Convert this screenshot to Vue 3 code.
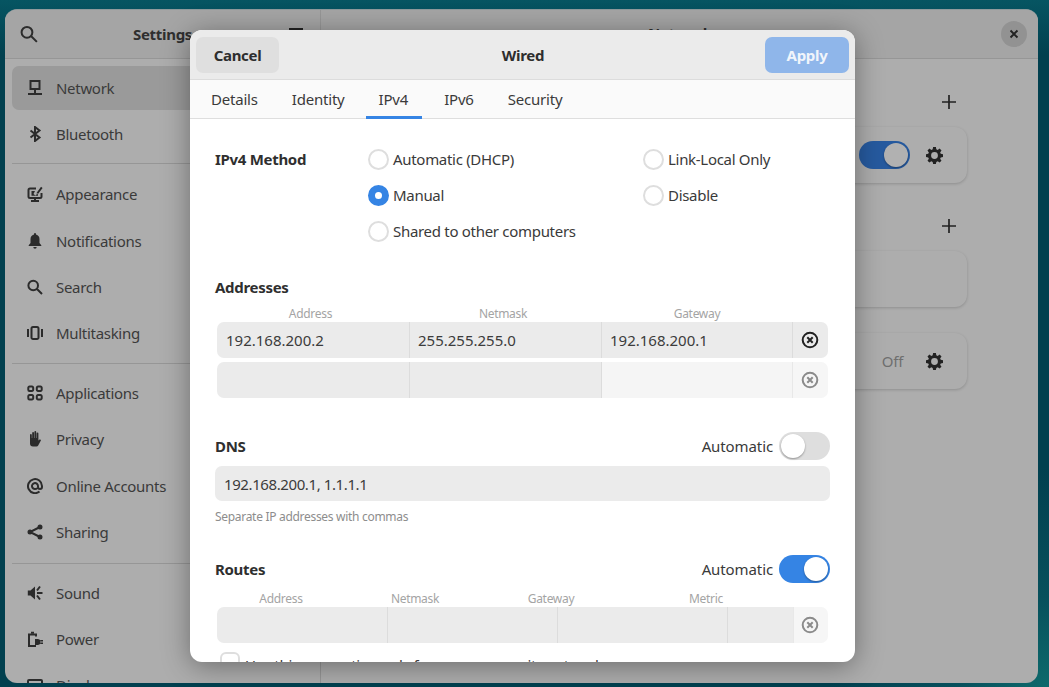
<script setup>
const groups = [
  [
    { name: 'Network', active: true, d: 'M2.500 0h11v10h-11z M4.500 2v6h7V2z M7 10h2v3H7z M1 13h14v2H1z' },
    { name: 'Bluetooth', s: 'M3.500 4.500l9 7L8 15V1l4.500 3.500-9 7' },
  ],
  [
    { name: 'Appearance', s: 'M9 2.500H3A1.500 1.500 0 0 0 1.500 4v6.500A1.500 1.500 0 0 0 3 12h10a1.500 1.500 0 0 0 1.500-1.500V7 M4 15h8', d: 'M4.500 5H8L6.500 8l2 1.500L11 7v2.800H4.500z M9.500 7L14 .8l1.600 1.200-5 6.500z M7 12h2v3H7z' },
    { name: 'Notifications', d: 'M8 0a1 1 0 0 1 1 1v.6A4.800 4.800 0 0 1 12.500 6.300V10l1.800 2.200V13H1.700v-.8L3.500 10V6.300A4.800 4.800 0 0 1 7 1.600V1a1 1 0 0 1 1-1z M6.300 14h3.400a1.700 1.700 0 0 1-3.400 0z' },
    { name: 'Search', s: 'M11 6.500a4.800 4.800 0 1 1-9.600 0 4.800 4.800 0 0 1 9.600 0z M10 10l5 5' },
    { name: 'Multitasking', s: 'M6 2h4a1.500 1.500 0 0 1 1.500 1.500v9A1.500 1.500 0 0 1 10 14H6a1.500 1.500 0 0 1-1.500-1.500v-9A1.500 1.500 0 0 1 6 2z M1 4v8 M15 4v8' },
  ],
  [
    { name: 'Applications', s: 'M2.500 1.500h2.500a1.200 1.200 0 0 1 1.200 1.200v2.100a1.200 1.200 0 0 1-1.200 1.200H2.500a1.200 1.200 0 0 1-1.200-1.200V2.700a1.200 1.200 0 0 1 1.200-1.200z M11 1.500h2.500a1.200 1.200 0 0 1 1.200 1.200v2.100a1.200 1.200 0 0 1-1.200 1.200H11a1.200 1.200 0 0 1-1.200-1.200V2.700A1.200 1.200 0 0 1 11 1.500z M2.500 10h2.500a1.200 1.200 0 0 1 1.200 1.200v2.100a1.200 1.200 0 0 1-1.200 1.200H2.500a1.200 1.200 0 0 1-1.200-1.200v-2.100A1.200 1.200 0 0 1 2.500 10z M11 10h2.500a1.200 1.200 0 0 1 1.200 1.200v2.100a1.200 1.200 0 0 1-1.200 1.200H11a1.200 1.200 0 0 1-1.200-1.200v-2.100A1.200 1.200 0 0 1 11 10z' },
    { name: 'Privacy', d: 'M3 4a.9.9 0 0 1 1.800 0v3h.4V2a.9.9 0 0 1 1.800 0v5h.4V1a.9.9 0 0 1 1.800 0v6h.4V2.500a.9.9 0 0 1 1.800 0V9.500l1.600-1.200 1 .9-2.800 5.300a2 2 0 0 1-1.800 1H6a3 3 0 0 1-3-3z' },
    { name: 'Online Accounts', s: 'M12.500 13.500A7 7 0 1 1 15 8v1a2 2 0 0 1-4 0V8a3 3 0 1 0-.8 2.100' },
    { name: 'Sharing', d: 'M15.500 3a2.500 2.500 0 1 1-5 0 2.500 2.500 0 0 1 5 0z M5.500 8a2.500 2.500 0 1 1-5 0 2.500 2.500 0 0 1 5 0z M15.500 13a2.500 2.500 0 1 1-5 0 2.500 2.500 0 0 1 5 0z', s: 'M13 3L3 8l10 5' },
  ],
  [
    { name: 'Sound', d: 'M8 1.500v13L3.500 10.500H.8v-5h2.700z', s: 'M10 8h5.500 M10 5.500l3-4 M10 10.500l3 4' },
    { name: 'Power', s: 'M9 5.500V3.500H2V15h7', d: 'M4 .8h3v2H4z M8 8h2.500a3 3 0 0 1 3 3 3 3 0 0 1-3 3H8z M13 9h3v1.500h-3z M13 11.500h3V13h-3z' },
    { name: 'Displays', s: 'M2 3h12a1 1 0 0 1 1 1v7a1 1 0 0 1-1 1H2a1 1 0 0 1-1-1V4a1 1 0 0 1 1-1z' },
  ],
]
const tabs = ['Details', 'Identity', 'IPv4', 'IPv6', 'Security']
const radiosA = [
  { label: 'Automatic (DHCP)' },
  { label: 'Manual', on: true },
  { label: 'Shared to other computers' },
]
const radiosB = [{ label: 'Link-Local Only' }, { label: 'Disable' }]
const addressRows = [
  { values: ['192.168.200.2', '255.255.255.0', '192.168.200.1'], on: true },
  { values: ['', '', ''], on: false },
]
const routeHeads = ['Address', 'Netmask', 'Gateway', 'Metric']
</script>

<template>
  <div class="desktop">
    <div class="window">
      <header class="win-head">
        <div class="wh-left">
          <svg class="ic lg" viewBox="0 0 16 16"><path fill="none" stroke="currentColor" stroke-width="1.800" d="M11 6.500a4.800 4.800 0 1 1-9.600 0 4.800 4.800 0 0 1 9.600 0z M10 10l5 5" /></svg>
          <span class="wh-title">Settings</span>
          <svg class="ic hamb" viewBox="0 0 16 16"><path fill="currentColor" d="M1 2h14v2H1z M1 7h14v2H1z M1 12h14v2H1z" /></svg>
        </div>
        <div class="wh-right">
          <span class="wh-net">Network</span>
          <span class="close"><svg viewBox="0 0 16 16"><path fill="none" stroke="currentColor" stroke-width="2.200" d="M4 4l8 8 M12 4l-8 8" /></svg></span>
        </div>
      </header>
      <div class="win-body">
        <nav class="side">
          <div v-for="(g, i) in groups" :key="i" class="group">
            <div v-for="it in g" :key="it.name" class="item" :class="{ active: it.active }">
              <svg class="ic" viewBox="0 0 16 16">
                <path v-if="it.s" :d="it.s" fill="none" stroke="currentColor" stroke-width="2" />
                <path v-if="it.d" :d="it.d" fill="currentColor" fill-rule="evenodd" />
              </svg>
              <span>{{ it.name }}</span>
            </div>
          </div>
        </nav>
        <main class="pane">
          <div class="plus-row"><svg class="ic" viewBox="0 0 16 16"><path stroke="currentColor" stroke-width="1.700" d="M8 1v14 M1 8h14" /></svg></div>
          <div class="card">
            <span class="sw dark"><i></i></span>
            <svg class="ic gear" viewBox="0 0 16 16"><path fill="currentColor" fill-rule="evenodd" d="M6.700 0h2.600l.4 2.200 1.300.6L12.800 1.500l1.800 1.800-1.300 1.800.6 1.300 2.100.4v2.600l-2.100.4-.6 1.300 1.300 1.800-1.800 1.800-1.800-1.300-1.300.6-.4 2h-2.600l-.4-2-1.300-.6-1.800 1.300-1.800-1.800 1.300-1.800-.6-1.300-2.100-.4V6.800l2.100-.4.6-1.300-1.300-1.800 1.800-1.800 1.800 1.300 1.300-.6z M8 4.800a3.200 3.200 0 1 0 0 6.400 3.200 3.200 0 0 0 0-6.400z" /></svg>
          </div>
          <div class="plus-row second"><svg class="ic" viewBox="0 0 16 16"><path stroke="currentColor" stroke-width="1.700" d="M8 1v14 M1 8h14" /></svg></div>
          <div class="card"></div>
          <div class="card third">
            <span class="off">Off</span>
            <svg class="ic gear" viewBox="0 0 16 16"><path fill="currentColor" fill-rule="evenodd" d="M6.700 0h2.600l.4 2.200 1.300.6L12.800 1.500l1.800 1.800-1.300 1.800.6 1.300 2.100.4v2.600l-2.100.4-.6 1.300 1.300 1.800-1.800 1.800-1.800-1.300-1.300.6-.4 2h-2.600l-.4-2-1.300-.6-1.800 1.300-1.800-1.800 1.300-1.800-.6-1.300-2.100-.4V6.800l2.100-.4.6-1.300-1.300-1.800 1.800-1.800 1.800 1.300 1.300-.6z M8 4.800a3.200 3.200 0 1 0 0 6.400 3.200 3.200 0 0 0 0-6.400z" /></svg>
          </div>
        </main>
      </div>
    </div>

    <section class="dialog">
      <div class="d-head">
        <button class="btn cancel">Cancel</button>
        <strong>Wired</strong>
        <button class="btn apply">Apply</button>
      </div>
      <div class="tabs">
        <span v-for="t in tabs" :key="t" class="tab" :class="{ on: t === 'IPv4' }">{{ t }}</span>
      </div>
      <div class="d-body">
        <div class="method">
          <b class="m-label">IPv4 Method</b>
          <div class="m-col a">
            <label v-for="r in radiosA" :key="r.label" class="radio"><i :class="{ on: r.on }"></i>{{ r.label }}</label>
          </div>
          <div class="m-col">
            <label v-for="r in radiosB" :key="r.label" class="radio"><i></i>{{ r.label }}</label>
          </div>
        </div>

        <b class="sec addr-title">Addresses</b>
        <div class="grid-head addr"><span>Address</span><span>Netmask</span><span>Gateway</span><span></span></div>
        <div v-for="(r, i) in addressRows" :key="i" class="grid-row addr">
          <span v-for="(v, j) in r.values" :key="j" class="cell" :class="{ pale: j === 2 && !r.on }">{{ v }}</span>
          <span class="cell del" :class="{ on: r.on }">
            <svg viewBox="0 0 18 18"><circle cx="9" cy="9" r="7.300" fill="none" stroke="currentColor" stroke-width="2" /><path d="M6.300 6.300l5.400 5.400 M11.700 6.300l-5.400 5.400" stroke="currentColor" stroke-width="2" /></svg>
          </span>
        </div>

        <div class="sec-row dns-row">
          <b class="sec">DNS</b>
          <span class="auto">Automatic <span class="sw"><i></i></span></span>
        </div>
        <div class="input">192.168.200.1, 1.1.1.1</div>
        <div class="hint">Separate IP addresses with commas</div>

        <div class="sec-row routes-row">
          <b class="sec">Routes</b>
          <span class="auto">Automatic <span class="sw blue"><i></i></span></span>
        </div>
        <div class="grid-head route"><span v-for="h in routeHeads" :key="h">{{ h }}</span></div>
        <div class="grid-row route">
          <span class="cell"></span><span class="cell"></span><span class="cell"></span><span class="cell"></span>
          <span class="cell del">
            <svg viewBox="0 0 18 18"><circle cx="9" cy="9" r="7.300" fill="none" stroke="currentColor" stroke-width="2" /><path d="M6.300 6.300l5.400 5.400 M11.700 6.300l-5.400 5.400" stroke="currentColor" stroke-width="2" /></svg>
          </span>
        </div>
        <label class="check"><i></i><span>Use this connection only for resources on its network</span></label>
      </div>
    </section>
  </div>
</template>

<style>
html, body { margin: 0; height: 100%; overflow: hidden; }
</style>

<style scoped>
.desktop {
  position: relative;
  width: 1049px;
  height: 687px;
  box-sizing: border-box;
  padding: 9px 11px 4px 5px;
  overflow: hidden;
  display: flex;
  font-family: "Noto Sans", "Open Sans", sans-serif;
  font-size: 15px;
  letter-spacing: -0.3px;
  color: #333;
  background:
    radial-gradient(circle at 1049px 687px, #0d6a6c 0, #07505c 90px, transparent 220px),
    linear-gradient(180deg, #065562 0, #01404f 8%, #01404f 100%);
}
.window {
  flex: 1;
  display: flex;
  flex-direction: column;
  border-radius: 12px;
  overflow: hidden;
  background: #adadad;
  border-top: 1px solid #8f9a9c;
}
.win-head {
  height: 48px;
  flex: none;
  display: flex;
  background: #a5a5a5;
  border-bottom: 1px solid #969696;
}
.wh-left {
  width: 316px;
  flex: none;
  box-sizing: border-box;
  display: flex;
  align-items: center;
  padding: 0 16px 0 15px;
  border-right: 1px solid #969696;
}
.wh-title { flex: 1; text-align: center; font-weight: 700; font-size: 15px; color: #2f2f2f; padding-right: 1px; }
.wh-right { flex: 1; position: relative; display: flex; align-items: center; justify-content: flex-end; padding-right: 11px; }
.wh-net { position: absolute; left: 327px; top: 11px; line-height: 24px; font-weight: 700; color: #2f2f2f; }
.close {
  width: 26px; height: 26px; border-radius: 50%; background: #929292;
  display: flex; align-items: center; justify-content: center; color: #222;
}
.close svg { width: 14px; height: 14px; }
.ic { width: 16px; height: 16px; flex: none; display: block; }
.ic.lg { width: 18px; height: 18px; color: #2d2d2d; }
.hamb { color: #222; }
.win-body { flex: 1; min-height: 0; display: flex; }
.side {
  width: 316px;
  flex: none;
  box-sizing: border-box;
  padding: 7px 6px 0 7px;
  border-right: 1px solid #969696;
  overflow: hidden;
}
.group { border-bottom: 1px solid #969696; padding-bottom: 6px; margin-bottom: 7px; }
.group:first-child { padding-bottom: 5px; margin-bottom: 8px; }
.group:nth-child(3) { padding-bottom: 7px; }
.item {
  height: 44px;
  margin-bottom: 2.200px;
  border-radius: 7px;
  display: flex;
  align-items: center;
  gap: 13px;
  padding-left: 15px;
  color: #3a3a3a;
}
.item .ic { color: #2b2b2b; }
.item.active { background: #9a9a9a; }
.pane {
  flex: 1;
  min-width: 0;
  display: flex;
  flex-direction: column;
  align-items: flex-end;
  padding-right: 71px;
  padding-top: 35px;
}
.plus-row { height: 17px; margin-bottom: 16px; padding-right: 10px; display: flex; justify-content: flex-end; color: #222; }
.plus-row.second { margin-top: 35px; }
.card {
  width: 500px;
  height: 56px;
  flex: none;
  box-sizing: border-box;
  border-radius: 12px;
  background: #adadad;
  box-shadow: 0 1px 3px rgba(0,0,0,.18);
  display: flex;
  align-items: center;
  justify-content: flex-end;
  padding-right: 24px;
  gap: 16px;
}
.card.third { margin-top: 26px; }
.gear { width: 17px; height: 17px; color: #222; }
.off { color: #6f6f6f; margin-right: 7px; }
.sw {
  width: 51px; height: 28px; flex: none; box-sizing: border-box;
  border-radius: 14px; background: #dedede; display: inline-flex; align-items: center; padding: 2px;
}
.sw i { width: 24px; height: 24px; border-radius: 50%; background: #fff; box-shadow: 0 1px 2px rgba(0,0,0,.35); }
.sw.dark { background: #265a9f; justify-content: flex-end; }
.sw.dark i { background: #b1b1b1; }
.sw.blue { background: #3584e4; justify-content: flex-end; }

.dialog {
  position: absolute;
  left: 190px; top: 30px;
  width: 665px; height: 632px;
  border-radius: 12px;
  background: #fff;
  overflow: hidden;
  display: flex;
  flex-direction: column;
  box-shadow: 0 4px 28px rgba(0,0,0,.38);
}
.d-head {
  height: 50px; flex: none; box-sizing: border-box;
  padding: 7px 6px;
  background: #ebebeb;
  border-bottom: 1px solid #dcdcdc;
  display: flex; align-items: center; justify-content: space-between;
  color: #2e2e2e;
}
.d-head strong { font-size: 15px; margin-left: 2px; }
.btn {
  width: 83px; height: 36px; border: 0; border-radius: 7px;
  font: 700 15px "Noto Sans", sans-serif; padding: 0; letter-spacing: inherit;
}
.cancel { background: #dfdfdf; color: #2e2e2e; }
.apply { width: 84px; background: #8fb6ea; color: #f1f5fb; }
.tabs {
  height: 39px; flex: none; box-sizing: border-box;
  background: #fafafa; border-bottom: 1px solid #dedede;
  display: flex; padding-left: 9px; gap: 10px;
  letter-spacing: -0.2px;
}
.tab { padding: 0 12px; height: 39px; line-height: 38px; box-sizing: border-box; color: #3a3a3a; }
.tab.on { border-bottom: 3px solid #3584e4; padding: 0 14px 0 13px; margin-left: -1px; }
.d-body { flex: 1; min-height: 0; padding: 0 25px; overflow: hidden; }
b { font-weight: 700; color: #2f2f2f; }
.method { display: flex; padding-top: 22px; height: 156px; box-sizing: border-box; }
.m-label { width: 153px; line-height: 36px; height: 36px; }
.m-col { display: flex; flex-direction: column; }
.m-col.a { width: 275px; }
.radio { height: 36px; display: flex; align-items: center; gap: 4px; color: #3a3a3a; }
.radio i {
  width: 21px; height: 21px; box-sizing: border-box; border-radius: 50%; border: 2px solid #dedede; background: #fff;
}
.radio i.on { border: 7px solid #3584e4; }
.sec { display: block; line-height: 24px; }
.grid-head { display: grid; margin: 0 2px; height: 23px; line-height: 23px; font-size: 12px; color: #a4a4a4; text-align: center; padding-top: 3px; box-sizing: border-box; }
.grid-row { display: grid; margin: 0 2px 4px; height: 36px; border-radius: 7px; overflow: hidden; }
.grid-row.addr { grid-template-columns: 192px 192px 191px 36px; }
.grid-head.addr { grid-template-columns: 187px 198px 190px 36px; }
.grid-row.route { grid-template-columns: 170px 170px 170px 66px 35px; }
.grid-head.route { grid-template-columns: 128px 140px 132px 178px; margin-top: 1px; }
.cell {
  background: #ebebeb; border-left: 1px solid #dcdcdc; line-height: 36px;
  padding-left: 8px; color: #3c3c3c; box-sizing: border-box; letter-spacing: 0;
}
.cell:first-child { border-left: 0; padding-left: 9px; }
.cell.pale { background: #f5f5f5; }
.del { background: #f6f6f6; padding: 0 2px 0 0; display: flex; align-items: center; justify-content: center; color: #8b8b8b; border-left: 1px solid #e8e8e8; }
.del.on { background: #ebebeb; color: #222; border-left-color: #dcdcdc; }
.del svg { width: 18px; height: 18px; }
.sec-row { display: flex; align-items: center; justify-content: space-between; height: 28px; }
.dns-row { margin-top: 34px; }
.routes-row { margin-top: 29px; }
.auto { display: flex; align-items: center; gap: 6px; color: #3a3a3a; letter-spacing: -0.1px; }
.input {
  margin-top: 6px; height: 35px; line-height: 36px; border-radius: 7px;
  background: #ebebeb; padding-left: 9px; color: #3c3c3c; letter-spacing: -0.4px;
}
.hint { margin-top: 7px; font-size: 12px; color: #8d8d8d; line-height: 18px; }
.check { display: flex; align-items: center; gap: 5px; margin: 8px 0 0 5px; height: 22px; color: #3a3a3a; white-space: nowrap; }
.check span { padding-top: 6px; }
.check i { width: 20px; height: 20px; box-sizing: border-box; border: 2px solid #dedede; border-radius: 6px; }
</style>
